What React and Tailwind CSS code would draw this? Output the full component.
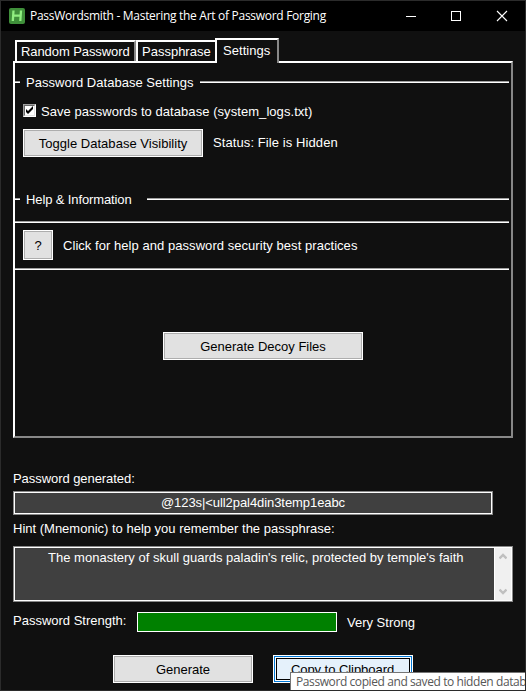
const Text = ({ className = "", children }) => (
  <span className={`block whitespace-pre leading-4 ${className}`}>{children}</span>
);

const Button = ({ className = "", children }) => (
  <button className={`border border-white bg-[#e1e1e1] text-black ${className}`}>
    <span className="flex h-full w-full items-center justify-center whitespace-pre border border-[#adadad] pt-[2px]">
      {children}
    </span>
  </button>
);

const Rule = ({ className = "" }) => (
  <div className={`h-[2px] border-t border-[#a0a0a0] bg-white ${className}`} />
);

const Heading = ({ className = "", width, children }) => (
  <div className={`flex h-4 items-center ${className}`}>
    <Rule className="w-[5px]" />
    <div className={`pl-[6px] pt-[2px] ${width}`}>
      <Text>{children}</Text>
    </div>
    <Rule className="flex-1" />
  </div>
);

function TitleBar() {
  return (
    <header className="flex h-[30px] items-center bg-black pl-2">
      <svg width="16" height="16" viewBox="0 0 16 16" className="shrink-0">
        <rect width="16" height="16" rx="2" fill="#3f8f3a" />
        <path d="M4.500 2.500l-.7 10.500M12 2.500l-.7 10.500M4.500 7.700h7" stroke="#90ee80" strokeWidth="2.300" fill="none" />
      </svg>
      <h1 className="ml-[5px] flex-1 whitespace-pre font-['Open_Sans','Noto_Sans',sans-serif] text-[12px] leading-4 tracking-[-0.29px]">
        PassWordsmith - Mastering the Art of Password Forging
      </h1>
      <svg width="110" height="12" viewBox="0 0 110 12" fill="none" stroke="white" className="mr-[16px] shrink-0" shapeRendering="crispEdges">
        <path d="M7 6.500h10" />
        <path d="M52.500 1.500h9v9h-9z" />
        <path d="M98 1l10 10M108 1L98 11" shapeRendering="auto" strokeWidth="1.1" />
      </svg>
    </header>
  );
}

function Tabs() {
  return (
    <nav className="relative z-10 -mb-[2px] flex h-[25px] items-end pl-[2px]">
      <div className="mb-[2px] h-[21px] w-[121px] border-2 border-b-0 border-white border-r-[#888] pl-1 pt-[2px]">
        <Text className="tracking-[-0.08px]">Random Password</Text>
      </div>
      <div className="mb-[2px] h-[21px] w-[79px] border-2 border-r-0 border-b-0 border-white pl-1 pt-[2px]">
        <Text>Passphrase</Text>
      </div>
      <div className="h-[25px] w-[64px] border-2 border-b-0 border-white border-r-[#888] bg-[#101010] pl-[6px] pt-[3px]">
        <Text className="tracking-[0.05px]">Settings</Text>
      </div>
    </nav>
  );
}

function SettingsPane() {
  return (
    <section className="h-[377px] w-[500px] border-2 border-white border-b-[#888] border-r-[#888] pr-[2px]">
      <Heading className="mt-[11px]" width="w-[180px] tracking-[0.02px]">Password Database Settings</Heading>
      <div className="mt-[13px] flex h-4 items-center pl-2">
        <div className="mb-[1px] h-[13px] w-[13px] border border-[#a0a0a0] border-b-white border-r-white bg-white">
          <div className="h-[11px] w-[11px] border border-[#696969] border-b-[#e3e3e3] border-r-[#e3e3e3]">
            <svg width="9" height="9" viewBox="0 0 9 9" className="block">
              <path d="M1 3v3l2 2 5-5V0L3 5z" fill="black" />
            </svg>
          </div>
        </div>
        <Text className="ml-[5px] pt-[2px] tracking-[0.06px]">Save passwords to database (system_logs.txt)</Text>
      </div>
      <div className="mt-[10px] flex h-7 pl-2">
        <Button className="w-[180px] tracking-[0.03px]">Toggle Database Visibility</Button>
        <Text className="ml-[10px] mt-[6px] tracking-[0.09px]">Status: File is Hidden</Text>
      </div>
      <Heading className="mt-[34px]" width="w-[127px] tracking-[-0.12px]">{"Help & Information"}</Heading>
      <Rule className="mt-[14px]" />
      <div className="mt-[7px] flex h-[30px] items-center pl-2">
        <Button className="h-[30px] w-[30px]">?</Button>
        <Text className="ml-[10px] pt-[2px] tracking-[0.05px]">Click for help and password security best practices</Text>
      </div>
      <Rule className="mt-2" />
      <Button className="ml-[148px] mt-[62px] block h-7 w-[200px]">Generate Decoy Files</Button>
    </section>
  );
}

function Results() {
  return (
    <section>
      <Text className="mt-[33px] tracking-[-0.06px]">Password generated:</Text>
      <div className="mt-1 h-6 w-[480px] border border-[#888]">
        <div className="flex h-[22px] items-center justify-center border border-white bg-[#404040]">
          <Text className="tracking-[-0.07px]">{"@123s|<ull2pal4din3temp1eabc"}</Text>
        </div>
      </div>
      <Text className="mt-[6px]">Hint (Mnemonic) to help you remember the passphrase:</Text>
      <div className="mt-[9px] h-14 w-[500px] border border-[#888]">
        <div className="flex h-[54px] border border-white bg-[#404040]">
          <div className="flex-1 pl-[33px] pt-[2px]">
            <Text className="tracking-[0.012px]">The monastery of skull guards paladin's relic, protected by temple's faith</Text>
          </div>
          <div className="flex w-[17px] flex-col items-center justify-between border-l border-white bg-[#f0f0f0] py-[5px]">
            <svg width="8" height="7" viewBox="0 0 8 7"><path d="M.5 5.500l3.500-3.500 3.500 3.500" fill="none" stroke="#bfbfbf" strokeWidth="2.400" /></svg>
            <svg width="8" height="7" viewBox="0 0 8 7"><path d="M.5 1.500l3.500 3.500 3.500-3.500" fill="none" stroke="#bfbfbf" strokeWidth="2.400" /></svg>
          </div>
        </div>
      </div>
      <div className="mt-[10px] flex h-5">
        <Text className="w-[124px] pt-px">Password Strength:</Text>
        <div className="h-5 w-[200px] border border-white bg-[#008000]" />
        <Text className="ml-[10px] mt-[3px]">Very Strong</Text>
      </div>
    </section>
  );
}

export default function App() {
  return (
    <div className="relative h-[691px] w-[526px] overflow-hidden border border-[#2b2b2b] bg-[#101010] font-['Liberation_Sans',Arial,sans-serif] text-[13px] leading-4 text-white">
      <TitleBar />
      <main className="pl-3 pt-[7px]">
        <Tabs />
        <SettingsPane />
        <Results />
        <div className="ml-[100px] mt-[23px] flex h-7 gap-5">
          <Button className="w-[140px]">Generate</Button>
          <button className="w-[140px] border border-white bg-[#0078d7] p-px text-black">
            <span className="block h-full border border-white bg-[#e5f1fb]">
              <span className="flex h-full items-center justify-center whitespace-pre border border-black pt-[2px] pr-px tracking-[-0.05px]">Copy to Clipboard</span>
            </span>
          </button>
        </div>
      </main>
      <div className="absolute -left-px top-[574px] h-[56px] w-px bg-[#6e6e6e]" />
      <div className="absolute -bottom-px left-[21px] h-px w-[186px] bg-[#6e6e6e]" />
      <div className="absolute left-[289px] top-[671px] h-5 w-[240px] whitespace-pre border border-[#767676] bg-white pl-[5px] pt-[1px] font-['Open_Sans','Noto_Sans',sans-serif] text-[12px] leading-4 tracking-[-0.41px] text-[#575757]">
        Password copied and saved to hidden database
      </div>
    </div>
  );
}
